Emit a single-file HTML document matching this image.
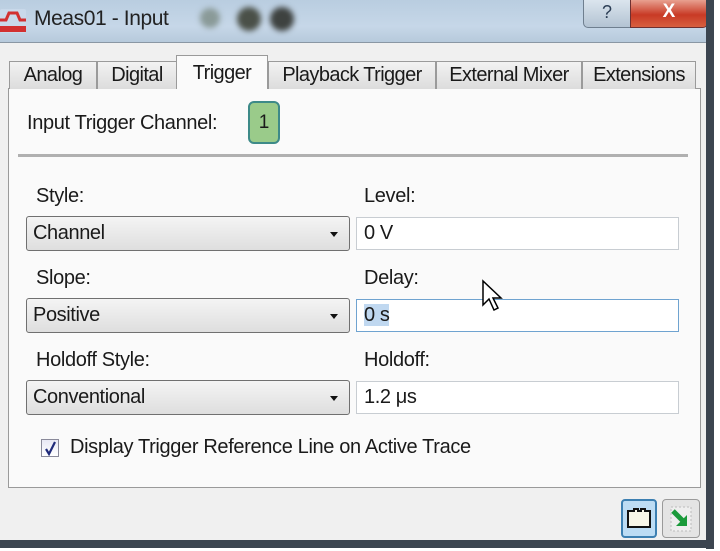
<!DOCTYPE html>
<html><head><meta charset="utf-8"><style>
*{box-sizing:border-box;margin:0;padding:0}
body{width:720px;height:551px;background:#fff;position:relative;overflow:hidden;font-family:"Liberation Sans",sans-serif;color:#1a1a1a}
.f{position:absolute;font-size:17px;letter-spacing:-0.4px;transform-origin:0 0}
#title{position:absolute;left:0;top:0;width:712px;height:44px;background:linear-gradient(180deg,#b9cde0,#c6d7e8 60%,#b5c8da);}
#frameR{position:absolute;left:706px;top:0;width:8px;height:549px;background:#3c4550}
#frameB{position:absolute;left:0;top:540px;width:714px;height:8px;background:#3c4550}
#body{position:absolute;left:0;top:42px;width:706px;height:498px;background:#f0f0f0;border-top:1px solid #8a97a4}
.tab{position:absolute;top:61px;height:28px;background:linear-gradient(#f2f2f2,#dcdcdc);border:1px solid #9a9a9a;border-bottom:none;font-size:20px;letter-spacing:-0.6px;text-align:center;line-height:27px;white-space:nowrap}
#panel{position:absolute;left:8px;top:88px;width:693px;height:400px;background:#fafafa;border:1px solid #9a9a9a}
.combo{position:absolute;left:26px;width:324px;height:35px;border:1px solid #707070;border-radius:3px;background:linear-gradient(#f4f4f4,#dedede);font-size:20px;letter-spacing:-0.4px;line-height:33px;padding-left:6px}
.combo:after{content:"";position:absolute;right:11px;top:15px;border:4px solid transparent;border-top:5px solid #111}
.tb{position:absolute;left:356px;width:323px;height:33px;background:#fff;border:1px solid #c8cdd2;font-size:20px;line-height:31px;padding-left:7px;letter-spacing:-0.4px}
.lbl{position:absolute;font-size:20px;letter-spacing:-0.35px;white-space:nowrap}
</style></head><body>
<div id="title"></div>
<div style="position:absolute;left:200px;top:8px;width:20px;height:20px;border-radius:50%;background:#8a9a98;filter:blur(3px)"></div>
<div style="position:absolute;left:237px;top:7px;width:24px;height:24px;border-radius:50%;background:#4a5048;filter:blur(3px)"></div>
<div style="position:absolute;left:270px;top:7px;width:24px;height:24px;border-radius:50%;background:#3e4240;filter:blur(3px)"></div>
<svg style="position:absolute;left:0;top:8px" width="26" height="26"><rect x="0" y="1" width="26" height="24" rx="2" fill="#c9d9ea"/><path d="M0 12 H6 L9 5 H17 L20 12 H26" stroke="#d23030" stroke-width="3" fill="none"/><rect x="0" y="18" width="26" height="6" fill="#d23030"/></svg>
<div class="f" style="left:34px;top:7px;font-size:21px;color:#222">Meas01 - Input</div>
<div style="position:absolute;left:583px;top:0;width:48px;height:28px;border:1px solid #6f7f8f;border-top:none;border-radius:0 0 0 5px;background:linear-gradient(#dbe5ee,#b3c3d3);color:#2c3e55;font-size:18px;text-align:center;line-height:24px">?</div>
<div style="position:absolute;left:630px;top:0;width:78px;height:28px;border:1px solid #6f3030;border-top:none;border-radius:0 0 5px 0;background:linear-gradient(#e8a090,#c83a25 55%,#d86040);color:#fff;font-size:19px;font-weight:bold;text-align:center;line-height:24px">X</div>
<div id="body"></div>
<div id="frameR"></div><div id="frameB"></div>
<div id="panel"></div>
<div class="tab" style="left:9px;width:88px">Analog</div>
<div class="tab" style="left:97px;width:80px">Digital</div>
<div class="tab" style="left:268px;width:168px">Playback Trigger</div>
<div class="tab" style="left:436px;width:146px">External Mixer</div>
<div class="tab" style="left:582px;width:114px">Extensions</div>
<div class="tab" style="left:176px;top:55px;width:92px;height:34px;background:#fafafa;line-height:34px">Trigger</div>
<div class="lbl" style="left:27px;top:112px">Input Trigger Channel:</div>
<div style="position:absolute;left:248px;top:101px;width:32px;height:43px;border:2px solid #3d8a88;border-radius:6px;background:#9acb8a;font-size:19px;text-align:center;line-height:39px">1</div>
<div style="position:absolute;left:18px;top:154px;width:670px;height:3px;background:#b0b0b0"></div>
<div class="lbl" style="left:36px;top:185px">Style:</div>
<div class="lbl" style="left:364px;top:185px">Level:</div>
<div class="combo" style="top:216px">Channel</div>
<div class="tb" style="top:217px">0 V</div>
<div class="lbl" style="left:36px;top:267px">Slope:</div>
<div class="lbl" style="left:364px;top:267px">Delay:</div>
<div class="combo" style="top:298px">Positive</div>
<div class="tb" style="top:299px;border-color:#6fa3d0"><span style="background:#c0d8f0">0 s</span></div>
<div class="lbl" style="left:36px;top:349px">Holdoff Style:</div>
<div class="lbl" style="left:364px;top:349px">Holdoff:</div>
<div class="combo" style="top:380px">Conventional</div>
<div class="tb" style="top:381px">1.2 μs</div>
<svg style="position:absolute;left:481px;top:279px" width="22" height="34"><path d="M2 2 V26 L8 20 L13 31 L17 29 L12 19 H20 Z" fill="#fff" stroke="#000" stroke-width="1.5"/></svg>
<div style="position:absolute;left:41px;top:439px;width:18px;height:18px;border:1px solid #8a8a9a;background:linear-gradient(#e8e8f4,#fff)"></div>
<svg style="position:absolute;left:43px;top:440px" width="15" height="16"><path d="M3 9 L6 14 L12 2" stroke="#1f2a7a" stroke-width="2.2" fill="none"/></svg>
<div class="lbl" style="left:70px;top:436px">Display Trigger Reference Line on Active Trace</div>
<div style="position:absolute;left:621px;top:499px;width:36px;height:39px;border:2px solid #3c7fb1;border-radius:4px;background:#bcdcf4"></div>
<svg style="position:absolute;left:626px;top:506px" width="26" height="24"><path d="M2 5 H8 V3 H12 V5 H15 V3 H19 V5 H24 V21 H2 Z" fill="#f8f6e8" stroke="#111" stroke-width="2"/></svg>
<div style="position:absolute;left:662px;top:499px;width:38px;height:39px;border:1px solid #9a9a9a;border-radius:4px;background:#e4e4e4"></div>
<svg style="position:absolute;left:667px;top:505px" width="28" height="28"><rect x="4" y="2" width="20" height="24" fill="#eee" stroke="#bbb" stroke-dasharray="2 2"/><path d="M6 6 L18 18" stroke="#1a9a3a" stroke-width="5"/><path d="M20 10 V21 H9 Z" fill="#1a9a3a"/></svg>
</body></html>
